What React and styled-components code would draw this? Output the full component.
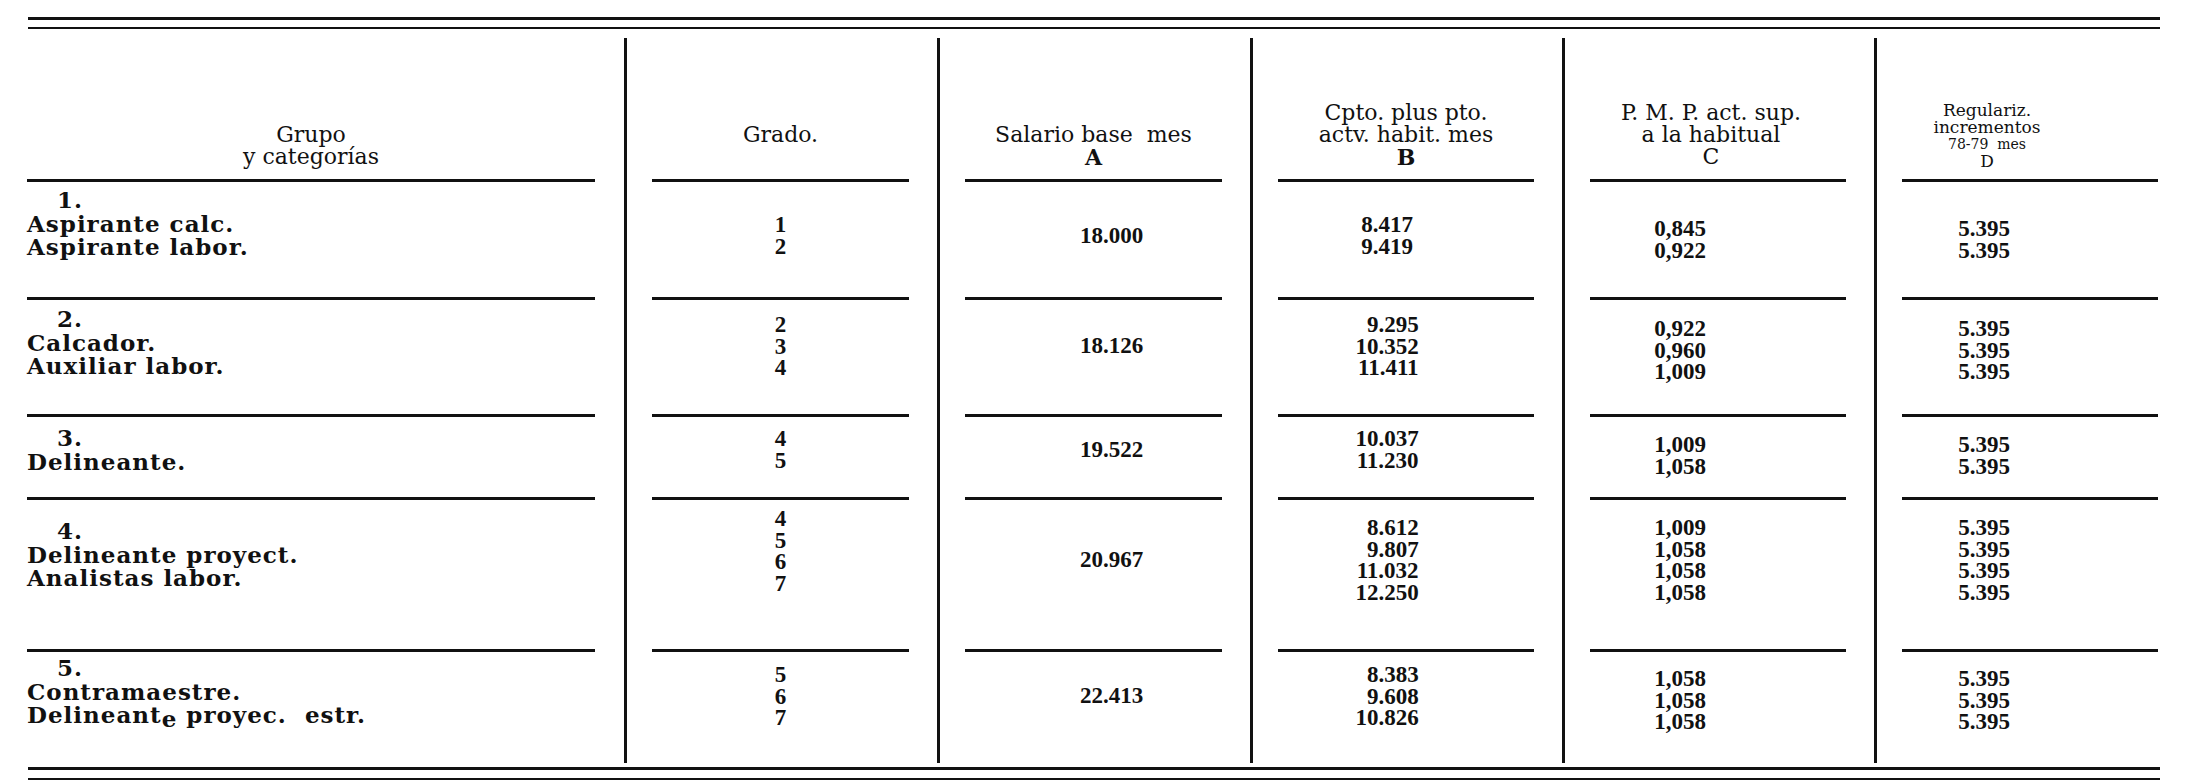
import React from 'react';
import styled, { createGlobalStyle } from 'styled-components';

const GlobalStyle = createGlobalStyle`
  html, body {
    margin: 0;
    padding: 0;
    background: #fff;
  }
  body {
    font-family: 'DejaVu Serif', 'Liberation Serif', serif;
    color: #111;
  }
`;

const Sheet = styled.div`
  width: 2193px;
  height: 784px;
  box-sizing: border-box;
  padding: 17px 0 0 27px;
  overflow: hidden;
`;

const RulePair = styled.div`
  display: flex;
  flex-direction: column;
  gap: ${p => p.$gap}px;
  width: 2132px;
  margin-left: 1px;
`;

const Rule = styled.div`
  height: ${p => p.$weight}px;
  background: #111;
`;

const Table = styled.div`
  display: grid;
  grid-template-columns: 597px 313px 313px 312px 312px 286px;
  grid-template-rows: ${p => p.$rows};
  margin: 9px 0 4px;
`;

const Cell = styled.div`
  display: flex;
  padding: ${p => (p.$col === 0 ? '0 29px 0 0' : p.$col === 5 ? '0 2px 0 25px' : '0 28px 0 25px')};
  border-left: ${p => (p.$col === 0 ? 'none' : '3px solid #111')};
`;

const HeadBody = styled.div`
  flex: 1;
  display: flex;
  flex-direction: column;
  align-items: center;
  justify-content: flex-end;
  padding: 0 ${p => p.$right || 0}px ${p => (p.$tight ? 9 : 11)}px 0;
  border-bottom: 3px solid #111;
`;

const HeadLine = styled.div`
  font-size: ${p => (p.$small ? 14 : p.$tight ? 17 : 22)}px;
  line-height: ${p => (p.$tight ? 17 : 22)}px;
  font-weight: ${p => (p.$bold ? 700 : 400)};
  white-space: pre;
`;

const DataBody = styled.div`
  flex: 1;
  display: flex;
  flex-direction: column;
  align-items: ${p => p.$align || 'center'};
  padding: ${p => p.$top}px ${p => p.$right || 0}px 0 ${p => p.$left || 0}px;
  border-bottom: ${p => (p.$ruled ? '3px solid #111' : 'none')};
`;

const CatLine = styled.div`
  font-size: 23px;
  line-height: 23.5px;
  font-weight: 700;
  letter-spacing: 1px;
  white-space: pre;
  padding-left: ${p => (p.$indent ? 30 : 0)}px;
`;

const Drop = styled.span`
  vertical-align: -4px;
`;

const NumStack = styled.div`
  display: flex;
  flex-direction: column;
  align-items: ${p => p.$align || 'flex-end'};
  font-family: 'Liberation Serif', 'DejaVu Serif', serif;
  font-size: 23px;
  line-height: 21.5px;
  font-weight: 700;
`;

const BaseValue = styled.div`
  height: ${p => p.$lines * 21.5}px;
  display: flex;
  align-items: center;
  font-family: 'Liberation Serif', 'DejaVu Serif', serif;
  font-size: 23px;
  font-weight: 700;
`;

const header = [
  { lines: ['Grupo', 'y categorías'] },
  { lines: ['Grado.', ' '] },
  { lines: ['Salario base  mes'], letter: 'A', bold: true },
  { lines: ['Cpto. plus pto.', 'actv. habit. mes'], letter: 'B', bold: true },
  { lines: ['P. M. P. act. sup.', 'a la habitual'], letter: 'C', right: 14 },
  { lines: ['Regulariz.', 'incrementos', '78-79  mes'], letter: 'D', tight: true, right: 86 },
];

const groups = [
  {
    height: 118, catTop: 6, gradoTop: 32, numTop: 32, cdTop: 36,
    cat: ['1.', 'Aspirante calc.', 'Aspirante labor.'],
    grado: ['1', '2'], base: '18.000',
    b: ['8.417', '9.419'], c: ['0,845', '0,922'], d: ['5.395', '5.395'],
  },
  {
    height: 117, catTop: 7, gradoTop: 14, numTop: 14, cdTop: 18,
    cat: ['2.', 'Calcador.', 'Auxiliar labor.'],
    grado: ['2', '3', '4'], base: '18.126',
    b: ['9.295', '10.352', '11.411'], c: ['0,922', '0,960', '1,009'], d: ['5.395', '5.395', '5.395'],
  },
  {
    height: 83, catTop: 9, gradoTop: 11, numTop: 11, cdTop: 17,
    cat: ['3.', 'Delineante.'],
    grado: ['4', '5'], base: '19.522',
    b: ['10.037', '11.230'], c: ['1,009', '1,058'], d: ['5.395', '5.395'],
  },
  {
    height: 152, catTop: 19, gradoTop: 8, numTop: 17, cdTop: 17,
    cat: ['4.', 'Delineante proyect.', 'Analistas labor.'],
    grado: ['4', '5', '6', '7'], base: '20.967',
    b: ['8.612', '9.807', '11.032', '12.250'], c: ['1,009', '1,058', '1,058', '1,058'],
    d: ['5.395', '5.395', '5.395', '5.395'],
  },
  {
    height: 111, catTop: 4, gradoTop: 12, numTop: 12, cdTop: 16,
    cat: ['5.', 'Contramaestre.', <>Delineant<Drop>e</Drop> proyec.  estr.</>],
    grado: ['5', '6', '7'], base: '22.413',
    b: ['8.383', '9.608', '10.826'], c: ['1,058', '1,058', '1,058'], d: ['5.395', '5.395', '5.395'],
  },
];

function Numbers({ values, align }) {
  return (
    <NumStack $align={align}>
      {values.map((v, i) => (
        <div key={i}>{v}</div>
      ))}
    </NumStack>
  );
}

function GroupCells({ group, ruled }) {
  const n = group.b.length;
  return (
    <>
      <Cell $col={0}>
        <DataBody $top={group.catTop} $ruled={ruled} $align="flex-start">
          {group.cat.map((line, i) => (
            <CatLine key={i} $indent={i === 0}>{line}</CatLine>
          ))}
        </DataBody>
      </Cell>
      <Cell $col={1}>
        <DataBody $top={group.gradoTop} $ruled={ruled}>
          <Numbers values={group.grado} align="center" />
        </DataBody>
      </Cell>
      <Cell $col={2}>
        <DataBody $top={group.numTop} $left={36} $ruled={ruled}>
          <BaseValue $lines={n}>{group.base}</BaseValue>
        </DataBody>
      </Cell>
      <Cell $col={3}>
        <DataBody $top={group.numTop} $right={38} $ruled={ruled}>
          <Numbers values={group.b} />
        </DataBody>
      </Cell>
      <Cell $col={4}>
        <DataBody $top={group.cdTop} $right={76} $ruled={ruled}>
          <Numbers values={group.c} />
        </DataBody>
      </Cell>
      <Cell $col={5}>
        <DataBody $top={group.cdTop} $right={92} $ruled={ruled}>
          <Numbers values={group.d} />
        </DataBody>
      </Cell>
    </>
  );
}

export default function App() {
  const rows = ['144px', ...groups.map(g => `${g.height}px`)].join(' ');
  return (
    <Sheet>
      <GlobalStyle />
      <RulePair $gap={7}>
        <Rule $weight={3} />
        <Rule $weight={2} />
      </RulePair>
      <Table $rows={rows}>
        {header.map((h, col) => (
          <Cell key={col} $col={col}>
            <HeadBody $tight={h.tight} $right={h.right}>
              {h.lines.map((line, i) => (
                <HeadLine key={i} $tight={h.tight} $small={h.tight && i === 2}>
                  {line}
                </HeadLine>
              ))}
              {h.letter && (
                <HeadLine $bold={h.bold} $tight={h.tight}>
                  {h.letter}
                </HeadLine>
              )}
            </HeadBody>
          </Cell>
        ))}
        {groups.map((g, i) => (
          <GroupCells key={i} group={g} ruled={i < groups.length - 1} />
        ))}
      </Table>
      <RulePair $gap={8}>
        <Rule $weight={3} />
        <Rule $weight={2} />
      </RulePair>
    </Sheet>
  );
}
